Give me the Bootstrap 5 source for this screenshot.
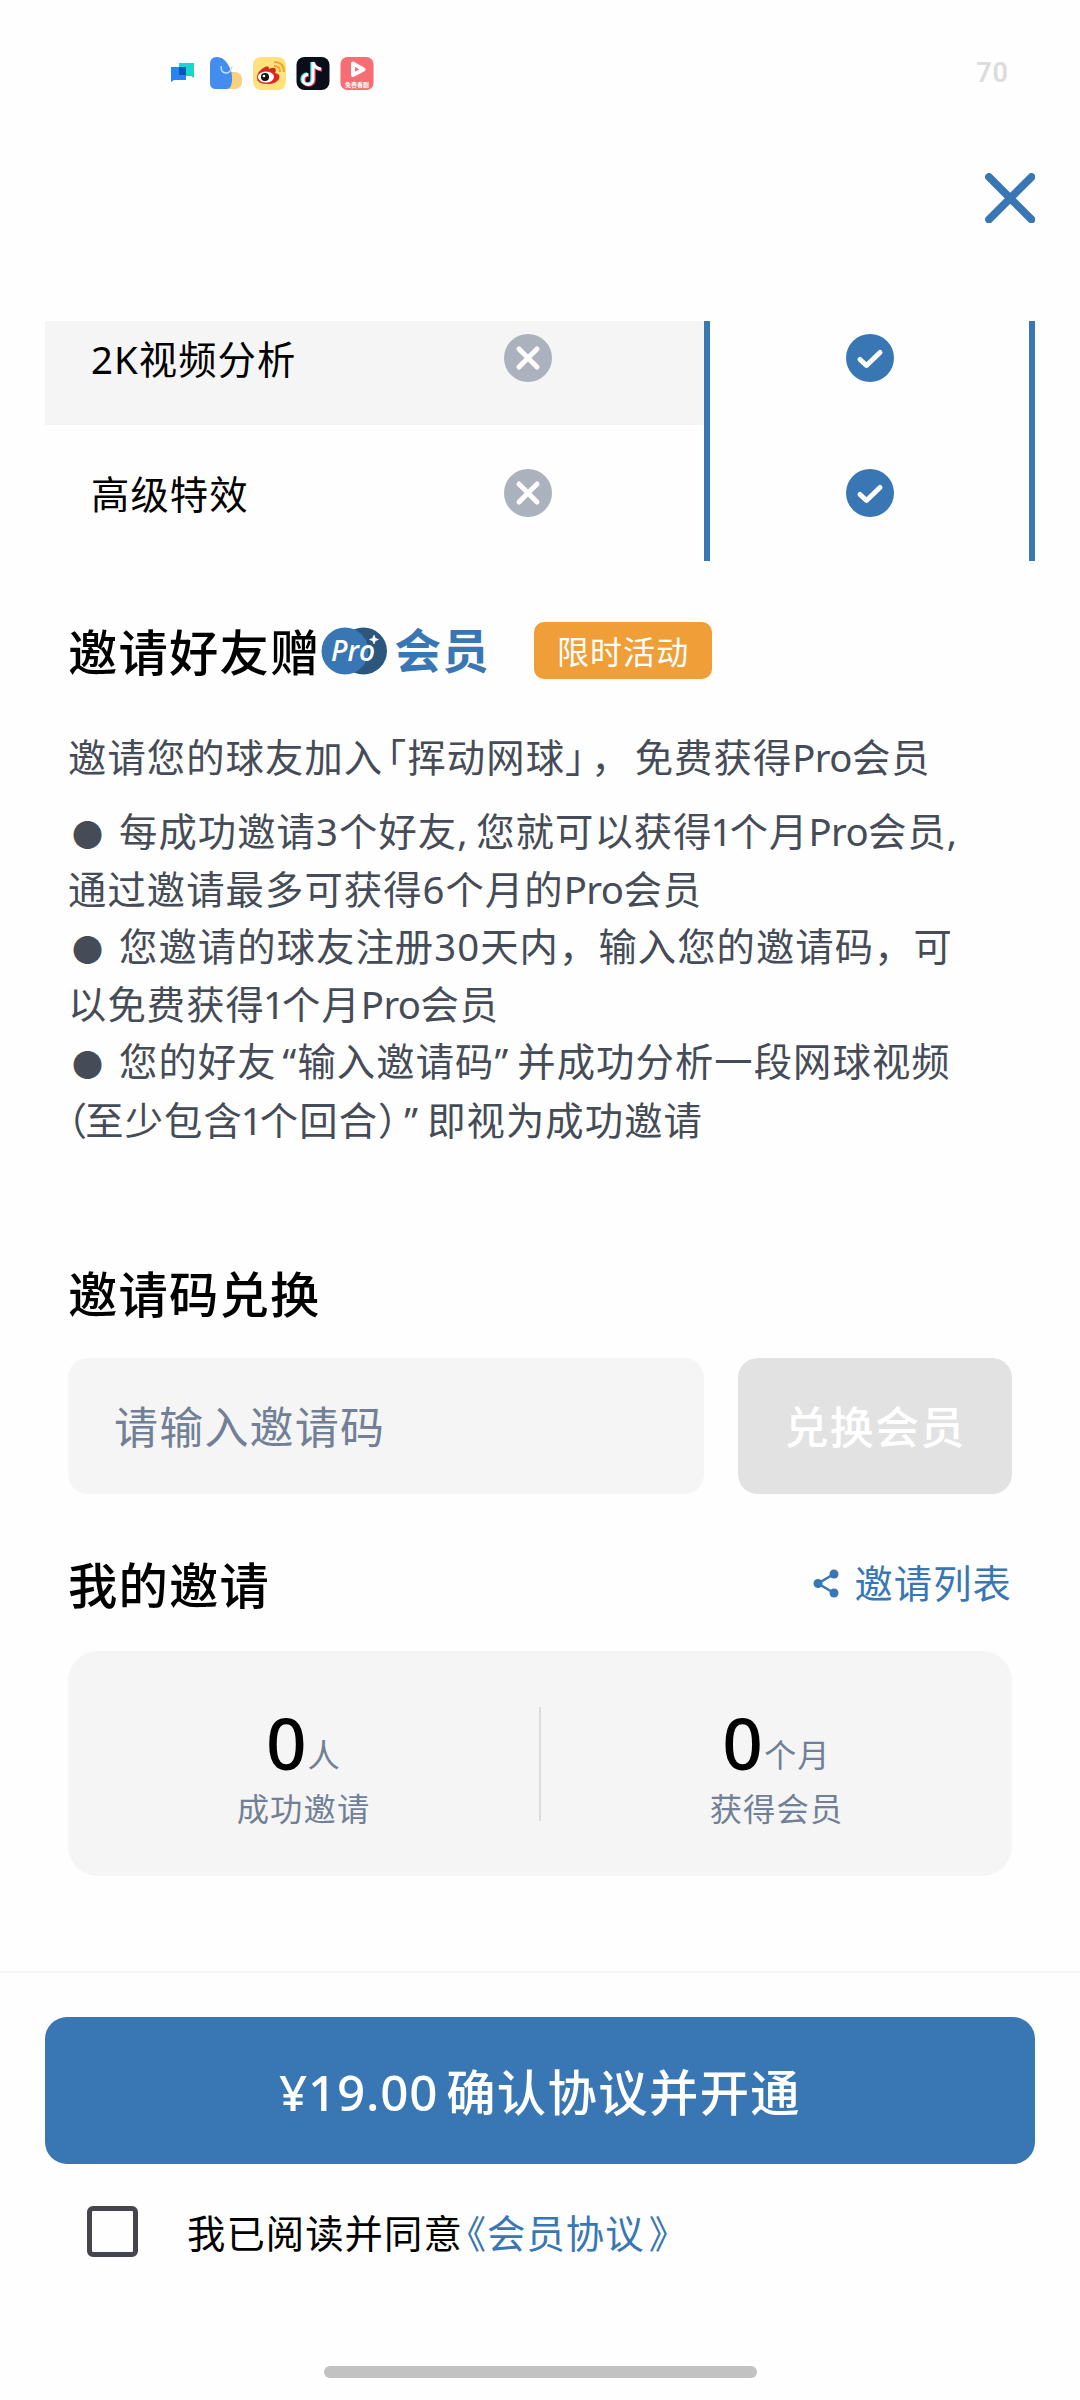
<!DOCTYPE html>
<html lang="zh-CN">
<head>
<meta charset="utf-8">
<meta name="viewport" content="width=device-width, initial-scale=1">
<title>Pro会员</title>
<link href="https://cdn.jsdelivr.net/npm/bootstrap@5.3.0/dist/css/bootstrap.min.css" rel="stylesheet">
<style>
:root{--brand:#3976b4;--soft:#f5f5f5;--slate:#718096;--ink:#454c57}
body{font-family:"Noto Sans","Noto Sans CJK SC",sans-serif;background:#fefefe;color:#000;font-size:38.3px;letter-spacing:1.1px;line-height:57.4px}
.screen{width:1080px;height:2400px;overflow:hidden}
.status-bar{height:144px;padding:2px 71px 0 171px}
.battery{font:600 27px/1 Roboto,sans-serif;color:#dcdcdc;letter-spacing:1px}
.top-bar{height:177px;padding:29px 45px 0 0}
.compare{height:240px;padding:0 45px}
.free-col{width:659px}
.pro-col{width:331px;border-left:6px solid var(--brand);border-right:6px solid var(--brand)}
.feature-row{padding-left:46px}
.shaded{background:var(--soft)}
.r-one{height:104px;padding-bottom:31px}
.r-two{height:136px;padding-bottom:1px}
.feature-name{width:413px;padding-top:4px}
.c-head{font-size:49.3px;font-weight:500;letter-spacing:1.2px;line-height:60px}
.invite-head{height:167px;padding:12px 0 0 68px}
.invite-head .c-head{padding-top:3px}
.member-word{font-size:46.5px;font-weight:700;letter-spacing:1.3px;color:var(--brand);margin-left:7px}
.promo{width:178px;height:57px;border-radius:10px;background:#f09f38;color:#fff;font-size:32px;font-weight:400;letter-spacing:1.1px;margin-left:44px;padding:2px 0 0}
.rules{padding-left:68px;color:var(--ink);white-space:nowrap;height:537px;margin-top:-1px}
.intro{margin-bottom:17px}
.dot{display:inline-block;width:51px;padding-left:4px;font-family:"Noto Sans CJK SC",sans-serif;font-size:31px;letter-spacing:0;line-height:1}
.halfw{font-family:"Noto Sans CJK SC",sans-serif;font-feature-settings:"halt"}
.latin{letter-spacing:-.6px}
.one{margin:0 -4px 0 -2px}
.sp-l{margin-left:6px}
.sp-r{margin-right:8px}
.sp-s{margin-left:4px}
.sp-e{margin-right:6px}
.paren{margin-right:-3px}
.redeem-head{height:94px;padding-left:68px}
.redeem{height:136px;padding:0 68px;gap:34px}
.redeem .form-control{width:636px;border:0;border-radius:20px;background:var(--soft);font-size:44px;letter-spacing:1.2px;padding:2px 0 0 46px}
.redeem .form-control::placeholder{color:var(--slate);opacity:1}
.redeem .btn{width:274px;border:0;border-radius:20px;background:#e2e2e2;color:#fff;font-size:44px;font-weight:500;letter-spacing:1.2px;opacity:1;padding:2px 0 0}
.mine-head{height:157px;padding:45px 68px 0}
.share-link{color:var(--brand);text-decoration:none;gap:15px}
.stats{height:225px;margin:0 68px;border-radius:30px;background:var(--soft);border:0}
.stat-cell{padding-top:9px}
.stat-num{font-size:71px;font-weight:500;letter-spacing:1px;line-height:74px}
.stat-sub{font-size:32.3px;letter-spacing:1.1px;color:var(--slate);line-height:44px}
.stat-unit{vertical-align:3px}
.stat-label{margin-top:2px}
.split{width:2px;height:114px;background:#dcdcdc}
.pay-bar{margin-top:95px;border-top:2px solid #f5f5f5;padding:44px 45px 0;height:428px}
.pay-btn{height:147px;border:0;border-radius:22px;background:var(--brand);color:#fff;font-size:49.3px;font-weight:500;letter-spacing:1.4px;padding:2px 0 0}
.price{margin-right:8px;letter-spacing:.8px}
.agree{padding-left:42px;height:135px}
.agree .form-check-input{width:51px;height:51px;border:5px solid #45454d;border-radius:6px;background:transparent;margin:0}
.agree label{margin-left:49px;padding-top:2px}
.terms{color:var(--brand)}
.home-pill{width:433px;height:12px;border-radius:6px;background:#c2c2c2;margin:67px auto 0}
</style>
<script src="https://cdn.jsdelivr.net/npm/bootstrap@5.3.0/dist/js/bootstrap.bundle.min.js"></script>
</head>
<body>
<svg width="0" height="0" class="position-absolute"><defs>
<symbol id="no" viewBox="0 0 48 48"><circle cx="24" cy="24" r="24" fill="#abb2be"/><path d="M15 15 33 33M33 15 15 33" stroke="#fff" stroke-width="5" stroke-linecap="round"/></symbol>
<symbol id="yes" viewBox="0 0 48 48"><circle cx="24" cy="24" r="24" fill="#3976b4"/><path d="M14 25.500 20.500 31.500 34 18.500" fill="none" stroke="#fff" stroke-width="5" stroke-linecap="round" stroke-linejoin="round"/></symbol>
</defs></svg>
<main class="screen">
<header class="status-bar d-flex align-items-center justify-content-between">
<svg width="203" height="34" viewBox="0 0 203 34">
<path d="M8 7h15v15l-3-2H8z" fill="#18d5cf"/><path d="M0 11h15v13H3l-3 2z" fill="#2585f5"/><path d="M8 11h7v8H8z" fill="#0758b5"/>
<rect x="52" y="16" width="19" height="17" rx="7" fill="#f7d17f"/><path d="M39 8Q39 1 46 1q6 0 10 6 6 8 5 18-1 8-5 8H45q-6 0-6-6z" fill="#448df0"/><path d="M50 10q0 7 5 7t6-7" fill="none" stroke="#c5e0ff" stroke-width="1.500"/>
<rect x="82" y="1" width="33" height="33" rx="8" fill="#ffe27b"/><path d="M86 22q0-7 8-11 4-2 4 2 6-3 7 1l-1 3q6 1 4 6-3 5-11 5-11 0-11-6z" fill="#dd2620"/><ellipse cx="95" cy="21" rx="8" ry="5.500" fill="#fff"/><circle cx="94" cy="21" r="4" fill="#111"/><circle cx="93" cy="20" r="1.300" fill="#fff"/><path d="M103 10q6 0 6 6M103 6q10 0 10 10" fill="none" stroke="#f3a52b" stroke-width="2"/>
<rect x="125.500" y="1" width="33" height="33" rx="8" fill="#0b0d18"/><path d="M141 6v17a5 5 0 1 1-5-5M141 6q1 6 8 7" fill="none" stroke="#25e5df" stroke-width="3.500"/><path d="M143 7v17a5 5 0 1 1-5-5M143 7q1 6 8 7" fill="none" stroke="#f33d5c" stroke-width="3.500"/><path d="M142 6v17.500a5 5 0 1 1-5-5M142 6q1 6 8 7" fill="none" stroke="#fff" stroke-width="3"/>
<rect x="169.500" y="1" width="33" height="33" rx="7" fill="#f86c73"/><path d="M182 7.500 192.500 13.500 182 19z" fill="none" stroke="#fff" stroke-width="4" stroke-linejoin="round"/><text x="186" y="30.500" text-anchor="middle" font-size="6" font-weight="700" letter-spacing="0" fill="#fff">免费看剧</text>
</svg>
<span class="battery">70</span>
</header>
<nav class="top-bar d-flex justify-content-end align-items-start">
<svg width="50" height="50" viewBox="0 0 50 50"><path d="M4 4 46.500 46.500M46.500 4 4 46.500" stroke="#3976b4" stroke-width="7.800" stroke-linecap="round"/></svg>
</nav>
<section class="compare d-flex">
<div class="free-col">
<div class="feature-row shaded r-one d-flex align-items-center"><span class="feature-name">2K视频分析</span><svg width="48" height="48"><use href="#no"/></svg></div>
<div class="feature-row r-two d-flex align-items-center"><span class="feature-name">高级特效</span><svg width="48" height="48"><use href="#no"/></svg></div>
</div>
<div class="pro-col">
<div class="r-one d-flex align-items-center justify-content-center"><svg width="48" height="48"><use href="#yes"/></svg></div>
<div class="r-two d-flex align-items-center justify-content-center"><svg width="48" height="48"><use href="#yes"/></svg></div>
</div>
</section>
<section class="invite-head d-flex align-items-center">
<span class="c-head">邀请好友赠</span>
<svg width="67" height="48" viewBox="0 0 67 48"><circle cx="43.500" cy="24" r="23.500" fill="#2c567d"/><circle cx="25" cy="24" r="23.500" fill="#3976b4"/><text x="33" y="34" text-anchor="middle" font-family="Open Sans" font-style="italic" font-weight="600" font-size="28" letter-spacing="0" fill="#fff">Pro</text><path d="M54 8l1.300 3.200 3.200 1.300-3.200 1.300-1.300 3.200-1.300-3.200-3.200-1.300 3.200-1.300z" fill="#fff" stroke="#fff" stroke-width=".6"/></svg>
<span class="member-word">会员</span>
<span class="promo badge d-flex align-items-center justify-content-center">限时活动</span>
</section>
<section class="rules">
<div class="intro">邀请您的球友加入<span class="halfw sp-s">「</span>挥动网球<span class="halfw sp-e">」</span>，<span class="sp-s">免</span>费获得<span class="latin">Pro</span>会员</div>
<div><span class="dot">●</span>每成功邀请3个好友<span class="latin">, </span>您就可以获得<span class="one">1</span>个月<span class="latin">Pro</span>会员,</div>
<div>通过邀请最多可获得6个月的<span class="latin">Pro</span>会员</div>
<div><span class="dot">●</span>您邀请的球友注册30天内，输入您的邀请码，可</div>
<div>以免费获得<span class="one">1</span>个月<span class="latin">Pro</span>会员</div>
<div><span class="dot">●</span>您的好友<span class="sp-l">“</span>输入邀请码<span class="sp-r">”</span>并成功分析一段网球视频</div>
<div><span class="halfw paren">（</span>至少包含<span class="one">1</span>个回合<span class="halfw">）</span><span class="sp-l sp-r">”</span>即视为成功邀请</div>
</section>
<section class="redeem-head"><span class="c-head">邀请码兑换</span></section>
<form class="redeem d-flex mt-auto">
<input class="form-control" type="text" placeholder="请输入邀请码" aria-label="邀请码">
<button class="btn" type="button" disabled>兑换会员</button>
</form>
<section class="mine-head d-flex justify-content-between align-items-start">
<span class="c-head mt-3">我的邀请</span>
<a class="share-link d-flex align-items-center mt-3" href="#"><svg width="26" height="29" viewBox="0 0 26 29"><path d="M21 5 5 14.500 21 24" fill="none" stroke="#3976b4" stroke-width="2.600"/><circle cx="21" cy="5" r="4.500" fill="#3976b4"/><circle cx="5" cy="14.500" r="4.500" fill="#3976b4"/><circle cx="21" cy="24" r="4.500" fill="#3976b4"/></svg><span>邀请列表</span></a>
</section>
<section class="stats card flex-row align-items-center">
<div class="stat-cell flex-fill w-50 text-center"><div><span class="stat-num">0</span><span class="stat-sub stat-unit">人</span></div><div class="stat-sub stat-label">成功邀请</div></div>
<div class="split"></div>
<div class="stat-cell flex-fill w-50 text-center"><div><span class="stat-num">0</span><span class="stat-sub stat-unit">个月</span></div><div class="stat-sub stat-label">获得会员</div></div>
</section>
<footer class="pay-bar">
<button class="btn pay-btn w-100" type="button"><span class="price">¥19.00</span>确认协议并开通</button>
<div class="agree d-flex align-items-center"><input class="form-check-input" type="checkbox" id="ok"><label for="ok">我已阅读并同意<span class="terms"><span class="halfw sp-s">《</span>会员协议<span class="halfw sp-s">》</span></span></label></div>
<div class="home-pill"></div>
</footer>
</main>
</body>
</html>
